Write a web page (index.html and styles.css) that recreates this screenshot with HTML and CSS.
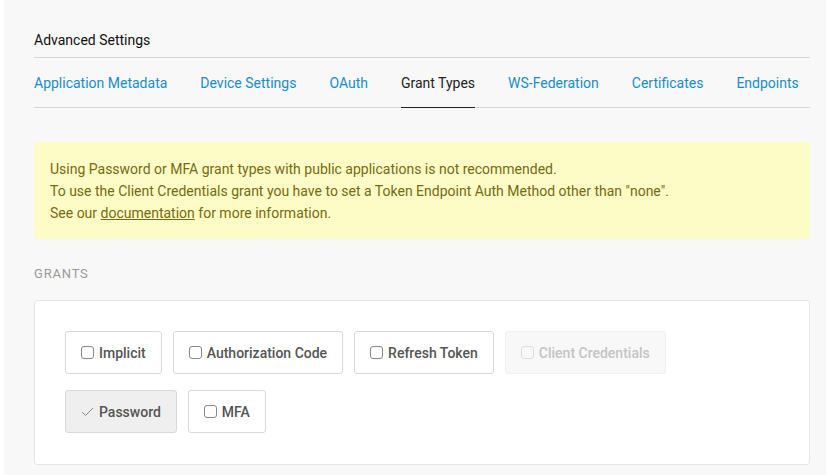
FILE: index.html
```html
<!DOCTYPE html>
<html>
<head>
<meta charset="utf-8">
<link rel="stylesheet" href="styles.css">
</head>
<body>
<div class="page">
  <h2 class="title">Advanced Settings</h2>
  <nav class="tabs">
    <a class="tab">Application Metadata</a>
    <a class="tab">Device Settings</a>
    <a class="tab">OAuth</a>
    <a class="tab active">Grant Types</a>
    <a class="tab">WS-Federation</a>
    <a class="tab">Certificates</a>
    <a class="tab">Endpoints</a>
  </nav>
  <div class="alert">
    <p>Using Password or MFA grant types with public applications is not recommended.</p>
    <p>To use the Client Credentials grant you have to set a Token Endpoint Auth Method other than "none".</p>
    <p>See our <a class="doclink">documentation</a> for more information.</p>
  </div>
  <div class="label">Grants</div>
  <div class="card">
    <div class="grants">
      <label class="grant"><span class="box"></span>Implicit</label>
      <label class="grant"><span class="box"></span>Authorization Code</label>
      <label class="grant"><span class="box"></span>Refresh Token</label>
      <label class="grant disabled"><span class="box"></span>Client Credentials</label>
    </div>
    <div class="grants">
      <label class="grant checked"><svg class="check" width="13" height="13" viewBox="0 0 13 13"><path d="M1 7 L4.5 10.5 L12 3" fill="none" stroke="#888" stroke-width="1"/></svg>Password</label>
      <label class="grant"><span class="box"></span>MFA</label>
    </div>
  </div>
</div>
</body>
</html>
```
FILE: styles.css
```css
html, body {
  margin: 0;
  padding: 0;
  background: #ffffff;
}
body {
  font-family: Roboto, "Noto Sans", sans-serif;
  font-size: 14px;
  color: #222;
}
.page {
  margin: 0 3px 0 4px;
  background: #f8f8f8;
  padding: 31px 16px 10px 30px;
  min-height: 475px;
  box-sizing: border-box;
}
.title {
  margin: 0;
  font-size: 14px;
  font-weight: 400;
  color: #111;
  line-height: 18px;
  padding-bottom: 8px;
  border-bottom: 1px solid #d6d6d6;
}
.tabs {
  display: flex;
  gap: 33px;
  border-bottom: 1px solid #d6d6d6;
}
.tab {
  display: block;
  white-space: nowrap;
  padding: 16px 0 15px;
  line-height: 18px;
  color: #1a8ccb;
  font-size: 14px;
  border-bottom: 1px solid transparent;
  margin-bottom: -1px;
}
.tab.active {
  color: #222;
  border-bottom-color: #222;
}
.alert {
  margin-top: 34px;
  background: #fdfcc6;
  border-radius: 3px;
  padding: 16px 16px 15px;
  color: #756b10;
  line-height: 22px;
  font-size: 14px;
}
.alert p { margin: 0; }
.doclink {
  color: #756b10;
  text-decoration: underline;
}
.label {
  margin-top: 27px;
  font-size: 13px;
  letter-spacing: 0.8px;
  text-transform: uppercase;
  color: #999;
  line-height: 16px;
}
.card {
  margin-top: 18px;
  background: #fff;
  border: 1px solid #e6e6e6;
  border-radius: 3px;
  padding: 30px 30px 31px;
  display: flex;
  flex-direction: column;
  gap: 16px;
}
.grants {
  display: flex;
  gap: 11px;
}
.grant {
  display: flex;
  align-items: center;
  height: 43px;
  box-sizing: border-box;
  padding: 0 15px;
  border: 1px solid #d9d9d9;
  border-radius: 3px;
  color: #555;
  font-weight: 500;
  font-size: 14px;
}
.box {
  width: 11px;
  height: 11px;
  border: 1px solid #888;
  border-radius: 3px;
  margin-right: 5px;
  background: #fff;
}
.grant.disabled {
  background: #f8f8f8;
  border-color: #f0f0f0;
  color: #c4c4c4;
}
.grant.disabled .box {
  border-color: #ddd;
  background: #f8f8f8;
}
.grant.checked {
  background: #efefef;
}
.check { margin-right: 5px; }
```
